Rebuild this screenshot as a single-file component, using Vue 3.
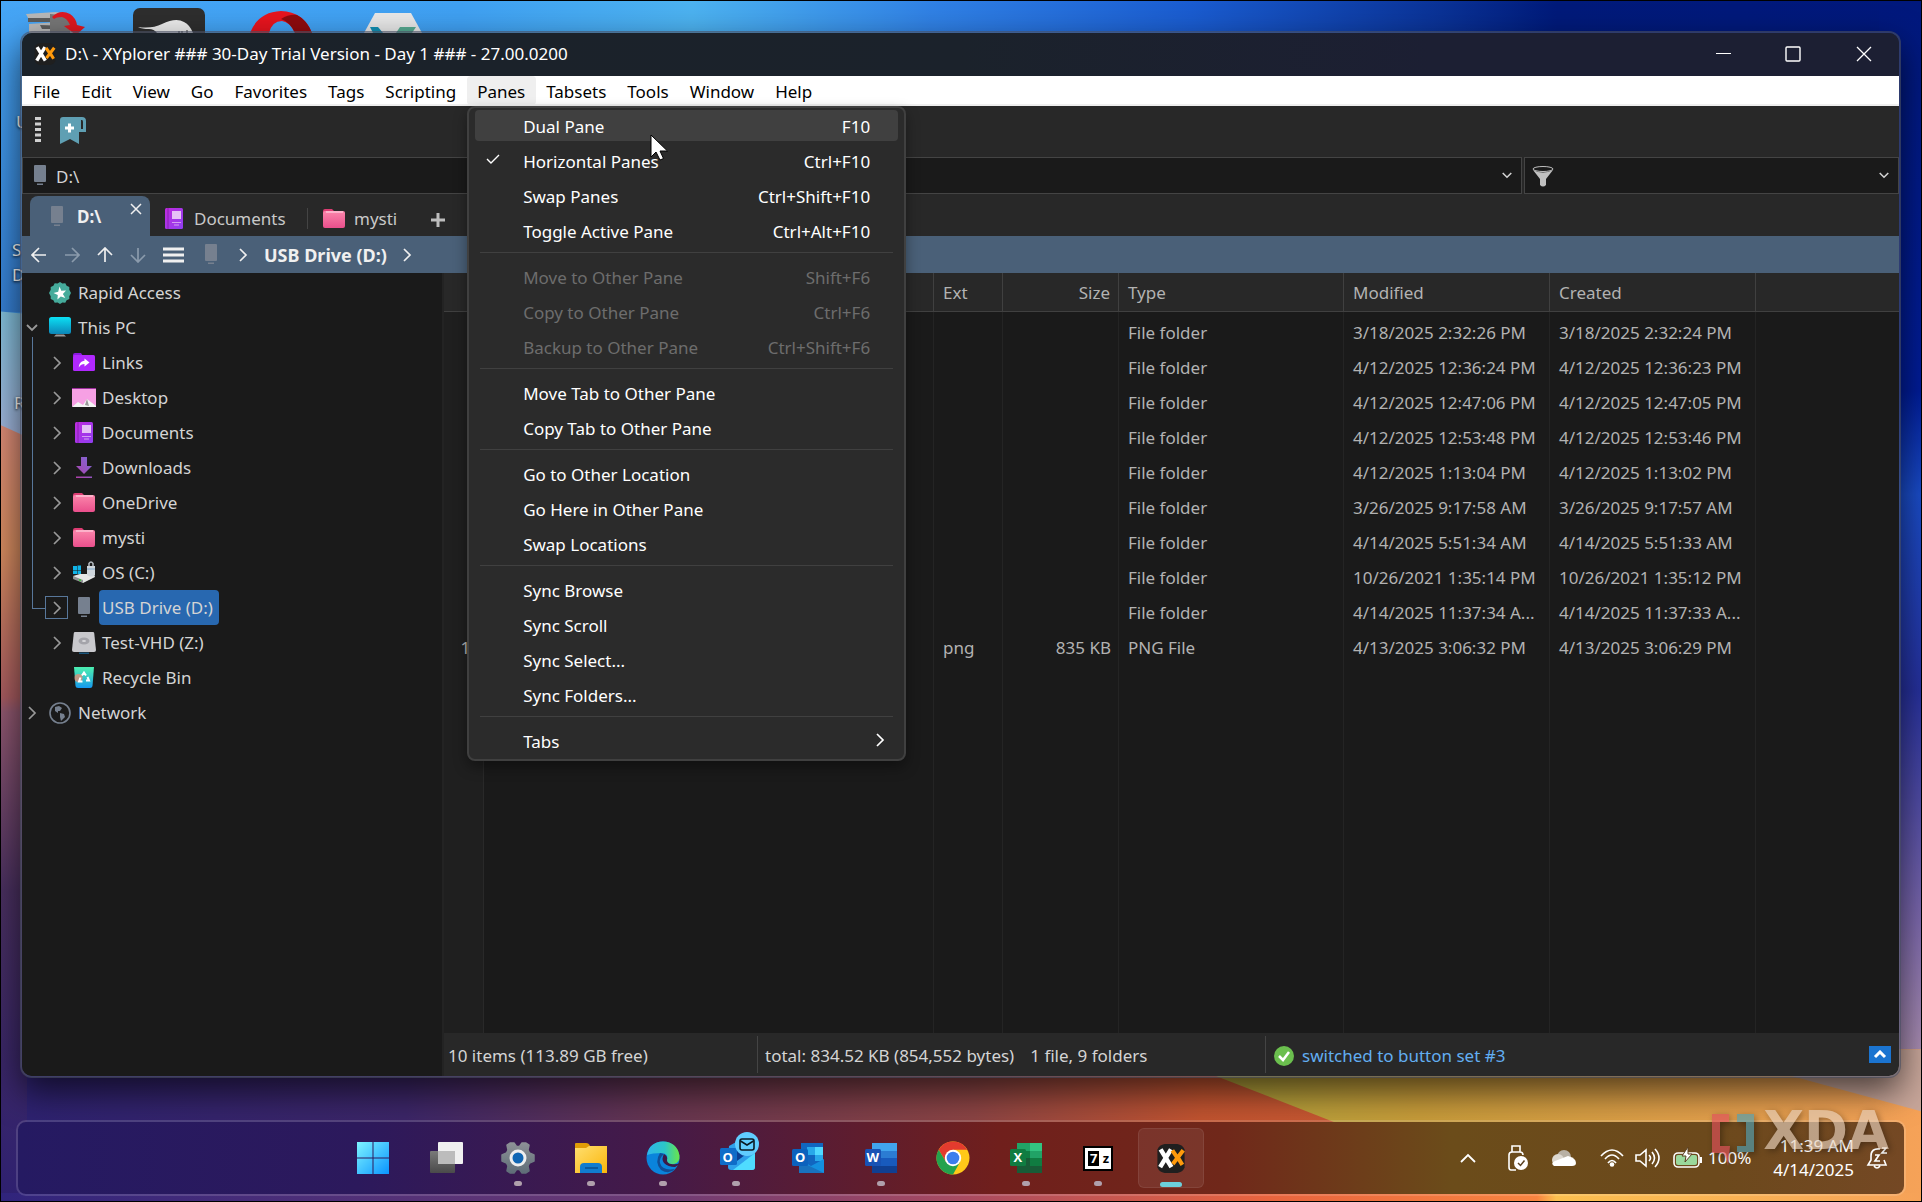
<script setup>
const menus = ['File', 'Edit', 'View', 'Go', 'Favorites', 'Tags', 'Scripting', 'Panes', 'Tabsets', 'Tools', 'Window', 'Help']

const paneMenu = [
  [
    { label: 'Dual Pane', keys: 'F10', hover: true },
    { label: 'Horizontal Panes', keys: 'Ctrl+F10', checked: true },
    { label: 'Swap Panes', keys: 'Ctrl+Shift+F10' },
    { label: 'Toggle Active Pane', keys: 'Ctrl+Alt+F10' },
  ],
  [
    { label: 'Move to Other Pane', keys: 'Shift+F6', off: true },
    { label: 'Copy to Other Pane', keys: 'Ctrl+F6', off: true },
    { label: 'Backup to Other Pane', keys: 'Ctrl+Shift+F6', off: true },
  ],
  [{ label: 'Move Tab to Other Pane' }, { label: 'Copy Tab to Other Pane' }],
  [{ label: 'Go to Other Location' }, { label: 'Go Here in Other Pane' }, { label: 'Swap Locations' }],
  [{ label: 'Sync Browse' }, { label: 'Sync Scroll' }, { label: 'Sync Select...' }, { label: 'Sync Folders...' }],
  [{ label: 'Tabs', sub: true }],
]

const tree = [
  { label: 'Rapid Access', icon: 'rapid', level: 0 },
  { label: 'This PC', icon: 'pc', level: 0, open: true },
  { label: 'Links', icon: 'links', level: 1, more: true },
  { label: 'Desktop', icon: 'desktop', level: 1, more: true },
  { label: 'Documents', icon: 'docs', level: 1, more: true },
  { label: 'Downloads', icon: 'down', level: 1, more: true },
  { label: 'OneDrive', icon: 'folder', level: 1, more: true },
  { label: 'mysti', icon: 'folder', level: 1, more: true },
  { label: 'OS (C:)', icon: 'osdrive', level: 1, more: true },
  { label: 'USB Drive (D:)', icon: 'usb', level: 1, more: true, current: true },
  { label: 'Test-VHD (Z:)', icon: 'vhd', level: 1, more: true },
  { label: 'Recycle Bin', icon: 'bin', level: 1 },
  { label: 'Network', icon: 'net', level: 0, more: true },
]

const folder = (modified, created) => ({ n: '', ext: '', size: '', type: 'File folder', modified, created })
const files = [
  folder('3/18/2025 2:32:26 PM', '3/18/2025 2:32:24 PM'),
  folder('4/12/2025 12:36:24 PM', '4/12/2025 12:36:23 PM'),
  folder('4/12/2025 12:47:06 PM', '4/12/2025 12:47:05 PM'),
  folder('4/12/2025 12:53:48 PM', '4/12/2025 12:53:46 PM'),
  folder('4/12/2025 1:13:04 PM', '4/12/2025 1:13:02 PM'),
  folder('3/26/2025 9:17:58 AM', '3/26/2025 9:17:57 AM'),
  folder('4/14/2025 5:51:34 AM', '4/14/2025 5:51:33 AM'),
  folder('10/26/2021 1:35:14 PM', '10/26/2021 1:35:12 PM'),
  folder('4/14/2025 11:37:34 A...', '4/14/2025 11:37:33 A...'),
  { n: '10', ext: 'png', size: '835 KB', type: 'PNG File', modified: '4/13/2025 3:06:32 PM', created: '4/13/2025 3:06:29 PM' },
]

const apps = [
  { id: 'start', name: 'Start' },
  { id: 'taskview', name: 'Task View' },
  { id: 'settings', name: 'Settings', run: true },
  { id: 'explorer', name: 'File Explorer', run: true },
  { id: 'edge', name: 'Edge', run: true },
  { id: 'newoutlook', name: 'Outlook (new)', run: true, glyph: 'O' },
  { id: 'outlook', name: 'Outlook', glyph: 'O' },
  { id: 'word', name: 'Word', run: true, glyph: 'W' },
  { id: 'chrome', name: 'Chrome' },
  { id: 'excel', name: 'Excel', run: true, glyph: 'X' },
  { id: 'sevenzip', name: '7-Zip', run: true, glyph: '7', second: 'z' },
  { id: 'xy', name: 'XYplorer', active: true },
]
</script>

<template>
  <div class="desktop">
    <svg class="defs" width="0" height="0" aria-hidden="true">
      <defs>
        <linearGradient id="gPink" x1="0" y1="0" x2="0" y2="1"><stop offset="0" stop-color="#fb86ab" /><stop offset="1" stop-color="#ea4f8c" /></linearGradient>
        <linearGradient id="gDoc" x1="0" y1="0" x2="1" y2="1"><stop offset="0" stop-color="#c02be0" /><stop offset="1" stop-color="#8f3ff0" /></linearGradient>
        <linearGradient id="gPc" x1="0" y1="0" x2="0" y2="1"><stop offset="0" stop-color="#0be0f4" /><stop offset="1" stop-color="#0c86b8" /></linearGradient>
        <linearGradient id="gDown" x1="0" y1="1" x2="1" y2="0"><stop offset="0" stop-color="#b03fa8" /><stop offset="1" stop-color="#7c6ad8" /></linearGradient>
        <linearGradient id="gBin" x1="0" y1="0" x2="0" y2="1"><stop offset="0" stop-color="#4cf0b0" /><stop offset=".5" stop-color="#36c8c8" /><stop offset="1" stop-color="#1498f0" /></linearGradient>
        <linearGradient id="gWin" x1="0" y1="0" x2="1" y2="1"><stop offset="0" stop-color="#7ef4ff" /><stop offset="1" stop-color="#0a94ff" /></linearGradient>
        <linearGradient id="gFold" x1="0" y1="0" x2="1" y2="1"><stop offset="0" stop-color="#ffdf70" /><stop offset="1" stop-color="#fbb60a" /></linearGradient>
        <linearGradient id="gEdge" x1="0" y1="0" x2="1" y2="0"><stop offset="0" stop-color="#2fb6ea" /><stop offset=".55" stop-color="#2cc6c8" /><stop offset="1" stop-color="#6ae548" /></linearGradient>
        <linearGradient id="gGear" x1="0" y1="0" x2="0" y2="1"><stop offset="0" stop-color="#8d9196" /><stop offset="1" stop-color="#5f6d78" /></linearGradient>
        <linearGradient id="gDark" x1="0" y1="0" x2="0" y2="1"><stop offset="0" stop-color="#7a7a7a" /><stop offset="1" stop-color="#4a4a4a" /></linearGradient>
      </defs>

      <symbol id="i-rapid" viewBox="0 0 24 24">
        <path fill="#45ab9b" d="M12 1l2.400 1.600 2.900-.4 1.300 2.600 2.700 1.100v2.900L23 12l-1.700 3.200v2.900l-2.700 1.100-1.300 2.600-2.900-.4L12 23l-2.400-1.600-2.900.4-1.300-2.600-2.700-1.100v-2.900L1 12l1.700-3.200V5.900l2.700-1.100 1.300-2.600 2.900.4z" />
        <path fill="#fff" d="M11.500 5.500l1.800 4.300 4.700-.4-3.100 3.500 2.400 4.100-4.500-1.600-3.400 3.200.4-4.700-4.300-2 4.700-1.200z" />
      </symbol>
      <symbol id="i-pc" viewBox="0 0 24 24">
        <rect x="1" y="1" width="22" height="17" rx="2.500" fill="url(#gPc)" /><path fill="#9a9a9a" d="M8 18.500h8l2 2H6z" />
      </symbol>
      <symbol id="i-links" viewBox="0 0 24 24">
        <path fill="#8a18e0" d="M1 5V4q0-2 2-2h6l2 3z" /><rect x="1" y="4" width="22" height="16" rx="1.500" fill="#b128ff" />
        <path fill="#fff" d="M12.500 7.500l5 4-5 4v-2.400c-2.500 0-4 .9-5.700 3.400.2-3.800 2-6.300 5.700-6.800z" />
      </symbol>
      <symbol id="i-desktop" viewBox="0 0 24 24">
        <rect y="2" width="24" height="19" rx="1" fill="#f6a0e4" /><path fill="#9c2f9c" d="M0 2h24v1H0z" />
        <path fill="#f4f4f4" d="M0 21l6-5 5 3 4-6 9 7v1z" /><path fill="#9a9a9a" d="M15 13l2 7-4-1z" />
      </symbol>
      <symbol id="i-docs" viewBox="0 0 24 24">
        <rect x="3" y="1" width="18" height="21" rx="1.500" fill="url(#gDoc)" /><path fill="#8a1fb0" d="M5.500 1h1v21h-1z" />
        <rect x="10" y="4" width="9" height="8" fill="#e6c2f6" /><path fill="#d59cf2" d="M10 15h9v1h-9zM12 17.500h5v1h-5z" />
      </symbol>
      <symbol id="i-down" viewBox="0 0 24 24"><path fill="url(#gDown)" d="M9 1h6v9h5l-8 8-8-8h5zM4 20.500h16V22H4z" /></symbol>
      <symbol id="i-folder" viewBox="0 0 24 24">
        <path fill="#dc3c72" d="M1 8V4q0-2 2-2h7l3 3h8q2 0 2 2z" /><rect x="1" y="4" width="22" height="17" rx="2" fill="url(#gPink)" />
        <path fill="#ffe0ea" d="M4 4.500h17v1H4z" />
      </symbol>
      <symbol id="i-osdrive" viewBox="0 0 24 24">
        <path fill="#10b4e8" d="M1 5h4v4H1zM5.500 4.500H9V9H5.500zM1 9.500h4V13H1zM5.500 9.500H9V13H5.500z" />
        <path fill="#e4e6e6" d="M1 15l7-2 14 0 1 3-12 6z" /><path fill="#8e9292" d="M1 15l10 4v3L1 18z" /><circle cx="8" cy="19" r="1" fill="#2bd02b" />
        <path fill="none" stroke="#b6bcc2" stroke-width="1.500" d="M17 6V2.500q2-3 4 0V6" /><path fill="#cfd6dc" d="M15 5h8v9q-4 3-8 0z" /><path stroke="#7da6c8" d="M15 8h8" />
      </symbol>
      <symbol id="i-usb" viewBox="0 0 24 24"><rect x="6" y="1" width="12" height="17" rx="1" fill="#76808f" /><path fill="#76808f" d="M9 19.500h6V21H9z" /></symbol>
      <symbol id="i-vhd" viewBox="0 0 24 24">
        <path fill="#c9c9cd" d="M3 1h18q1 0 1.200 1L24 19q0 2-2 2H2q-2 0-2-2L1.800 2Q2 1 3 1z" /><ellipse cx="12" cy="10" rx="5.500" ry="3.500" fill="#a4a4aa" /><ellipse cx="12" cy="10" rx="2" ry="1" fill="#d8d8dc" />
        <path fill="#1b567c" d="M7 21.500h10V23H7z" />
      </symbol>
      <symbol id="i-bin" viewBox="0 0 24 24">
        <path fill="url(#gBin)" d="M2 1h20l-1.500 19q-.2 2-2.500 2H6q-2.300 0-2.500-2z" /><circle cx="6.500" cy="12" r="4" fill="#ee8a70" opacity=".75" />
        <path fill="none" stroke="#fff" stroke-width="2" d="M10 9.500l2-3 2 3M15.500 11l1.500 3.500h-3M10.500 15.500H7l1.500-4" />
      </symbol>
      <symbol id="i-net" viewBox="0 0 24 24">
        <circle cx="12" cy="12" r="10" fill="none" stroke="#76808f" stroke-width="1.600" />
        <path fill="#76808f" d="M7 6l4-1 3 2-2 3-2 0 0 2-3-2zM12 12l4 1 1 3-4 4-1-4z" />
      </symbol>
      <symbol id="i-xy" viewBox="0 0 32 32">
        <path fill="#1f1f1f" d="M9 0h14q6 1 8 6v20q-2 5-8 6H9q-6-1-8-6V6Q3 1 9 0z" />
        <path stroke="#fff" stroke-width="5" fill="none" d="M4.500 6l12 19.500M16 6L4 25.500" />
        <path stroke="#ff9a0c" stroke-width="4.500" fill="none" d="M17.500 7l5 7.500M29.500 7L18 22M23 14l5.500 9" />
      </symbol>
      <symbol id="i-start" viewBox="0 0 34 34"><path fill="url(#gWin)" d="M1 1h15.500v15.500H1zM17.500 1H33v15.500H17.500zM1 17.500h15.500V33H1zM17.500 17.500H33V33H17.500z" /></symbol>
      <symbol id="i-taskview" viewBox="0 0 34 34"><rect x="1" y="10" width="25" height="22" rx="1" fill="url(#gDark)" /><rect x="9" y="1" width="25" height="22" rx="1" fill="#f0f0f0" /><path fill="#bcbcbc" d="M9 10h17v13H9z" /></symbol>
      <symbol id="i-settings" viewBox="0 0 34 34">
        <path fill="url(#gGear)" stroke="url(#gGear)" stroke-width="1.500" stroke-linejoin="round" d="M9 2h4l2.500 3.500h3L21 2h4l3 2-1 5 1.500 3 4.500 2v6l-4.500 2-1.500 3 1 5-3 2h-4l-2.500-3.500h-3L13 32H9l-3-2 1-5-1.500-3L1 20v-6l4.500-2L7 9 6 4z" />
        <circle cx="17" cy="17" r="7" fill="#1066b4" stroke="#eee" stroke-width="3" />
      </symbol>
      <symbol id="i-explorer" viewBox="0 0 34 34">
        <path fill="#e09c06" d="M1 8V3q0-1 1-1h10q3 0 4 3l-2 3z" /><path fill="url(#gFold)" d="M1 7h11l3-2h18v27H1z" />
        <path fill="#117cd0" d="M6 32v-6q0-4 4-4h14q4 0 4 4v6z" /><path stroke="#0a4f90" stroke-width="1.500" d="M11 27h13" />
      </symbol>
      <symbol id="i-edge" viewBox="0 0 34 34">
        <circle cx="17" cy="17" r="16.500" fill="#0a84dc" /><path fill="url(#gEdge)" d="M1 14Q3 1 17 .5q14 .5 16.500 14 .5 7-5.500 8.500-9 1-7-4 2-6-5-7-10 0-15 2z" />
        <path fill="#114e96" d="M14 12q-6 9 1 17 8 5 14-1-13 2-15-6-1-5 4-9z" /><path fill="#3c1a46" d="M18 13q-3 5 0 9 4 4 11 4l5-3v-1q-4 2-9 1-4-1-4-4 1-4-3-6z" />
      </symbol>
      <symbol id="i-newoutlook" viewBox="0 0 40 40">
        <path fill="#2ea0ea" d="M10 14L28 4l8 14v17q0 3-3 3H12q-3 0-3-3z" /><path fill="#0b3f92" d="M18 17h16L18 29z" /><path fill="#4fdcff" d="M36 21v14q0 3-3 3H14z" />
        <rect x="1" y="16" width="17" height="17" rx="1.500" fill="#0f6cc8" />
        <circle cx="28" cy="12" r="12" fill="#60cdff" /><rect x="21" y="7" width="14" height="11" rx="2" fill="none" stroke="#0a1a24" stroke-width="1.600" /><path d="M21.500 9l6.500 4 6.500-4" fill="none" stroke="#0a1a24" stroke-width="1.500" />
      </symbol>
      <symbol id="i-outlook" viewBox="0 0 34 34">
        <rect x="10" y="2" width="22" height="28" fill="#1166c0" /><path fill="#50d9ff" d="M24 6h8v8h-8z" /><path fill="#28a8ea" d="M16 6h8v8h-8zM24 14h8v6h-8z" /><path fill="#1490df" d="M8 32V18l12 7 13-7v14z" /><path fill="#1a5fa8" d="M8 20l25 12H8z" opacity=".6" />
        <rect x="1" y="8" width="16" height="17" rx="1.500" fill="#0b62bd" />
      </symbol>
      <symbol id="i-word" viewBox="0 0 34 34">
        <path fill="#41a5ee" d="M8 2h25v8H8z" /><path fill="#2b7cd3" d="M8 10h25v7H8z" /><path fill="#185abd" d="M8 17h25v8H8z" /><path fill="#103f91" d="M8 25h25v7H8z" />
        <rect x="1" y="8" width="16" height="17" rx="1.500" fill="#1852b4" />
      </symbol>
      <symbol id="i-excel" viewBox="0 0 34 34">
        <path fill="#21a366" d="M8 2h13v8H8z" /><path fill="#33c481" d="M21 2h12v8H21z" /><path fill="#107c41" d="M8 10h13v7H8zM21 17h12v8H21z" /><path fill="#21a366" d="M21 10h12v7H21z" /><path fill="#185c37" d="M8 17h13v8h12v7H8z" />
        <rect x="1" y="8" width="16" height="17" rx="1.500" fill="#107c41" />
      </symbol>
      <symbol id="i-chrome" viewBox="0 0 34 34">
        <circle cx="17" cy="17" r="16.500" fill="#ffc919" /><path fill="#e33b2e" d="M2.700 8.700A16.500 16.500 0 0 1 31.300 8.700H17L10 21z" /><path fill="#23a24d" d="M2.700 8.700A16.500 16.500 0 0 0 17 33.500L24 21H10z" />
        <circle cx="17" cy="17" r="8.200" fill="#fff" /><circle cx="17" cy="17" r="6.300" fill="#3b7ded" />
      </symbol>
      <symbol id="i-sevenzip" viewBox="0 0 34 34">
        <rect x="2" y="5" width="30" height="25" fill="#000" /><rect x="4" y="7" width="26" height="21" fill="#fff" /><path d="M7 10h11v15H7z" fill="#000" />
      </symbol>
      <symbol id="i-right" viewBox="0 0 12 16"><path fill="none" stroke="currentColor" stroke-width="1.700" d="M3 2l6 6-6 6" /></symbol>
      <symbol id="i-chev" viewBox="0 0 14 10"><path fill="none" stroke="currentColor" stroke-width="1.800" d="M2 2l5 5 5-5" /></symbol>
    </svg>

    <svg class="wall" viewBox="0 0 1922 1202" preserveAspectRatio="none" aria-hidden="true">
      <defs>
        <linearGradient id="wTop"><stop offset="0" stop-color="#46a6f6" /><stop offset=".24" stop-color="#3fa0f2" /><stop offset=".36" stop-color="#4cb2f0" /><stop offset=".49" stop-color="#2f7fe4" /><stop offset=".62" stop-color="#1a5cd0" /><stop offset=".75" stop-color="#0a3296" /><stop offset=".81" stop-color="#001a7a" /><stop offset="1" stop-color="#00187c" /></linearGradient>
        <linearGradient id="wL1" x1="0" y1="0" x2="0" y2="1"><stop offset="0" stop-color="#46a6f6" /><stop offset="1" stop-color="#3680d4" /></linearGradient>
        <linearGradient id="wL2" x1="0" y1="0" x2="0" y2="1"><stop offset="0" stop-color="#82c0dc" /><stop offset="1" stop-color="#a9b2dc" /></linearGradient>
        <linearGradient id="wL3" x1="0" y1="0" x2="0" y2="1"><stop offset="0" stop-color="#dc8c78" /><stop offset=".16" stop-color="#d68c60" /><stop offset=".35" stop-color="#a85c60" /><stop offset=".37" stop-color="#905870" /><stop offset=".6" stop-color="#4a3060" /><stop offset="1" stop-color="#2e2070" /></linearGradient>
        <linearGradient id="wR" x1="0" y1="0" x2="0" y2="1"><stop offset="0" stop-color="#00187c" /><stop offset=".34" stop-color="#001c98" /><stop offset=".43" stop-color="#1a4cc8" /><stop offset=".6" stop-color="#26309c" /><stop offset=".8" stop-color="#7c68ac" /><stop offset="1" stop-color="#caa8b4" /></linearGradient>
        <linearGradient id="wBot"><stop offset="0" stop-color="#2e2270" /><stop offset=".2" stop-color="#3c2668" /><stop offset=".34" stop-color="#683650" /><stop offset=".5" stop-color="#8c4444" /><stop offset=".62" stop-color="#c25430" /><stop offset="1" stop-color="#e0663a" /></linearGradient>
        <linearGradient id="wGold"><stop offset="0" stop-color="#a8a43a" /><stop offset=".35" stop-color="#c89c3a" /><stop offset="1" stop-color="#f6a258" /></linearGradient>
        <linearGradient id="wEdge"><stop offset="0" stop-color="#30247c" /><stop offset=".34" stop-color="#6c3a74" /><stop offset=".5" stop-color="#a84a60" /><stop offset=".66" stop-color="#e8643e" /><stop offset=".8" stop-color="#f88440" /><stop offset=".81" stop-color="#fcc050" /><stop offset="1" stop-color="#f6a258" /></linearGradient>
      </defs>
      <rect width="1922" height="600" fill="url(#wTop)" />
      <rect width="60" height="312" fill="url(#wL1)" />
      <path fill="url(#wL2)" d="M0 311l60 6v150H0z" />
      <path fill="url(#wL3)" d="M0 425l60 27v750H0z" />
      <rect x="1880" width="42" height="1150" fill="url(#wR)" />
      <rect x="26" y="1050" width="1896" height="152" fill="url(#wBot)" />
      <path fill="url(#wGold)" d="M1150 1050L1222 1079 1480 1180 1922 1202V1050z" />
      <path fill="#c8a69a" d="M1700 1050L1797 1078 1922 1112V1050z" />
      <rect y="1194" width="1922" height="8" fill="url(#wEdge)" />
    </svg>

    <svg class="shortcuts" width="480" height="33" viewBox="0 0 480 33" aria-hidden="true">
      <path fill="#b8b8b8" d="M26 14l30-2 14 3v3H28zM29 24l30-2 14 2v9H29z" /><path fill="#5c5c5c" d="M28 18h34v4H28zM40 25l28 1v3H42z" /><path fill="#777" d="M50 14l20 2v17H50z" />
      <path fill="#e01820" d="M52 17q8-8 18-3 6 4 7 11l8 2-9 8-12-9 6-1q-3-7-8-8-6 0-8 2z" />
      <rect x="133" y="8" width="72" height="40" rx="7" fill="#2e2e2e" /><path fill="#ececec" d="M138 27q14 2 24-3 14-7 22-2 6 3 9 11h-36q-3-4-8-4-7 0-11-2z" /><path stroke="#333" d="M179 31v2M182 31v2M187 30v3" />
      <path fill="#e8141e" d="M250 33Q258 12 281 11q23 1 31 22h-17q-5-11-13-12-10 0-13 12z" /><path fill="#8f0a0e" d="M281 19q8-5 16-4 10 5 15 18h-17q-5-11-14-14z" />
      <path fill="#e8e8e8" d="M375 13h36l11 20h-58z" /><path fill="#1190b4" d="M370 27h8l5 6h-10z" /><path fill="#57ab92" d="M400 27h16l-4 6h-16z" />
    </svg>
    <span class="label u">U</span><span class="label s">S</span><span class="label d">D</span><span class="label r">R</span>

    <main class="window">
      <header class="titlebar">
        <svg class="logo"><use href="#i-xy" /></svg>
        <h1>D:\ - XYplorer ### 30-Day Trial Version - Day 1 ### - 27.00.0200</h1>
        <button aria-label="Minimize"><svg width="16" height="16"><path d="M0 7.500h15" stroke="#fff" /></svg></button>
        <button aria-label="Maximize"><svg width="16" height="16"><rect x="1" y="1" width="14" height="14" rx="1" fill="none" stroke="#fff" stroke-width="1.400" /></svg></button>
        <button aria-label="Close"><svg width="16" height="16"><path d="M1 1l14 14M15 1L1 15" stroke="#fff" stroke-width="1.300" /></svg></button>
      </header>

      <nav class="menubar">
        <div v-for="m in menus" :key="m" class="slot">
          <button :class="{ open: m === 'Panes' }">{{ m }}</button>
          <div v-if="m === 'Panes'" class="popup" role="menu">
            <div v-for="(group, g) in paneMenu" :key="g" class="group">
              <button v-for="item in group" :key="item.label" role="menuitem" :class="{ hover: item.hover }" :disabled="item.off">
                <svg v-if="item.checked" class="tick" width="16" height="12"><path d="M2 6l4 4 8-8" fill="none" stroke="#fff" stroke-width="1.400" /></svg>
                <span>{{ item.label }}</span>
                <span v-if="item.keys" class="keys">{{ item.keys }}</span>
                <svg v-if="item.sub" class="sub"><use href="#i-right" /></svg>
              </button>
            </div>
          </div>
        </div>
      </nav>

      <div class="toolbar">
        <svg width="6" height="26"><path d="M3 0v26" stroke="#d0d0d0" stroke-width="6" stroke-dasharray="3 2.500" /></svg>
        <button aria-label="Bookmark">
          <svg width="28" height="28"><path fill="#5f9fb3" d="M1 4q0-3 3-3h19q4 0 4 4v11h-7v12l-9-5-10 5z" /><path fill="#282828" d="M22 4h1q1 0 1 2v7h-2z" /><path stroke="#fff" stroke-width="3" d="M10.500 7.500v9M6 12h9" /></svg>
        </button>
      </div>

      <div class="address">
        <label class="field">
          <svg class="ico"><use href="#i-usb" /></svg>
          <input aria-label="Address" value="D:\" />
          <svg class="drop"><use href="#i-chev" /></svg>
        </label>
        <label class="field filter">
          <svg width="22" height="22"><path fill="#c0c0c0" d="M1 5q10 5 20 0l-7 9v6q-3 3-6 0v-6z" /><ellipse cx="11" cy="4" rx="10" ry="2.500" fill="#1a1a1a" stroke="#c0c0c0" /></svg>
          <input aria-label="Filter" />
          <svg class="drop"><use href="#i-chev" /></svg>
        </label>
      </div>

      <div class="tabs">
        <div class="tab current">
          <svg class="ico"><use href="#i-usb" /></svg><b>D:\</b>
          <button aria-label="Close tab"><svg width="12" height="12"><path d="M1 1l10 10M11 1L1 11" stroke="#f0f0f0" stroke-width="1.500" /></svg></button>
        </div>
        <div class="tab docs"><svg class="ico"><use href="#i-docs" /></svg>Documents</div>
        <div class="tab user"><svg class="ico"><use href="#i-folder" /></svg>mysti</div>
        <button aria-label="New tab" class="plus"><svg width="14" height="14"><path d="M7 0v14M0 7h14" stroke="#bdbdbd" stroke-width="3" /></svg></button>
      </div>

      <div class="crumbs">
        <button aria-label="Back"><svg width="16" height="16"><path d="M15 8H1M8 1L1 8l7 7" /></svg></button>
        <button aria-label="Forward" class="dim"><svg width="16" height="16"><path d="M1 8h14M8 1l7 7-7 7" /></svg></button>
        <button aria-label="Up"><svg width="16" height="16"><path d="M8 15V1M1 8l7-7 7 7" /></svg></button>
        <button aria-label="Down" class="dim"><svg width="16" height="16"><path d="M8 1v14M1 8l7 7 7-7" /></svg></button>
        <button aria-label="Menu" class="burger"><svg width="21" height="16"><path d="M0 2h21M0 8h21M0 14h21" /></svg></button>
        <svg class="ico"><use href="#i-usb" /></svg>
        <svg class="sep"><use href="#i-right" /></svg>
        <b>USB Drive (D:)</b>
        <svg class="sep"><use href="#i-right" /></svg>
      </div>

      <div class="body">
        <ul class="tree">
          <li v-for="node in tree" :key="node.label" :class="['l' + node.level, { current: node.current }]">
            <span class="twist" :class="{ box: node.current }">
              <svg v-if="node.more" class="closed"><use href="#i-right" /></svg>
              <svg v-if="node.open" class="opened"><use href="#i-chev" /></svg>
            </span>
            <svg class="ico"><use :href="'#i-' + node.icon" /></svg>
            <span class="name">{{ node.label }}</span>
          </li>
        </ul>

        <section class="right">
          <div class="files">
            <table>
              <colgroup><col class="c-n" /><col class="c-name" /><col class="c-ext" /><col class="c-size" /><col class="c-type" /><col class="c-date" /><col class="c-date" /><col /></colgroup>
              <thead><tr><th></th><th></th><th>Ext</th><th class="num">Size</th><th>Type</th><th>Modified</th><th>Created</th><th></th></tr></thead>
              <tbody>
                <tr v-for="(f, i) in files" :key="i">
                  <td class="idx">{{ f.n }}</td><td></td><td>{{ f.ext }}</td><td class="num">{{ f.size }}</td><td>{{ f.type }}</td><td>{{ f.modified }}</td><td>{{ f.created }}</td><td></td>
                </tr>
              </tbody>
            </table>
          </div>
          <footer class="status">
            <span class="free">10 items (113.89 GB free)</span>
            <span class="total"><span>total: 834.52 KB (854,552 bytes)</span><span>1 file, 9 folders</span></span>
            <span class="msg">
              <svg width="20" height="20"><circle cx="10" cy="10" r="10" fill="#6bbf4e" /><path d="M5 10l4 4 6-8" fill="none" stroke="#fff" stroke-width="2.500" /></svg>
              switched to button set #3
            </span>
            <button aria-label="Show panel"><svg width="14" height="9"><path d="M2 7l5-5 5 5" fill="none" stroke="#fff" stroke-width="3" /></svg></button>
          </footer>
        </section>
      </div>
    </main>

    <footer class="taskbar">
      <nav class="apps">
        <button v-for="a in apps" :key="a.id" :aria-label="a.name" :class="[a.id, { run: a.run, active: a.active }]">
          <svg><use :href="'#i-' + a.id" /></svg>
          <span v-if="a.glyph" class="glyph">{{ a.glyph }}</span>
          <span v-if="a.second" class="glyph second">{{ a.second }}</span>
        </button>
      </nav>
      <div class="tray">
        <svg class="t-up" width="18" height="12"><path d="M2 10l7-7 7 7" fill="none" stroke="#fff" stroke-width="1.800" /></svg>
        <svg class="t-usb" width="22" height="26"><path d="M5 7V1h8v6M9 25H4q-2 0-2-3V10q0-3 3-3h8q3 0 3 3" fill="none" stroke="#fff" stroke-width="1.600" /><circle cx="14" cy="18" r="7" fill="#fff" /><path d="M11 18l2.500 2.500 4-5" fill="none" stroke="#5a4020" stroke-width="1.500" /></svg>
        <svg class="t-cloud" width="26" height="18"><circle cx="13" cy="8" r="7" fill="#b8b0a4" /><circle cx="7" cy="11" r="6" fill="#ddd8d0" /><path d="M3 17q-4-3 1-5l13-5q8 2 8 7 0 3-4 3z" fill="#fff" /></svg>
        <svg class="t-wifi" width="24" height="20"><g fill="none" stroke="#fff" stroke-width="1.700"><path d="M1 8q11-12 22 0M5 11q7-8 14 0M8 15q4-5 8 0" /></g><circle cx="12" cy="16.500" r="2.300" fill="#fff" /></svg>
        <svg class="t-vol" width="26" height="22"><g fill="none" stroke="#fff" stroke-width="1.600"><path d="M1 8h4l6-5v16l-6-5H1zM14 8q3 3 0 6M17 5q5 6 0 12M20 2q8 9 0 18" /></g></svg>
        <svg class="t-bat" width="30" height="22"><rect x="1" y="6" width="25" height="14" rx="4" fill="none" stroke="#fff" stroke-width="1.600" /><rect x="3" y="8" width="21" height="10" rx="2" fill="#9ad89c" /><path d="M28 10v6" stroke="#fff" stroke-width="2" /><path d="M15 0l-6 9h4l-1 6 7-8h-4z" fill="#fff" stroke="#5a4020" /></svg>
        <span>100%</span>
        <span class="clock"><span>11:39 AM</span><span>4/14/2025</span></span>
        <svg class="t-bell" width="24" height="24"><path d="M14 3Q5 2 5 10v4l-3 5h18l-2-5M8 20q3 4 6 0" fill="none" stroke="#fff" stroke-width="1.600" /><path d="M9 9h4l-4 6h5M16 2h4l-4 5h5" fill="none" stroke="#fff" stroke-width="1.700" /></svg>
      </div>
    </footer>

    <div class="mark">
      <svg width="42" height="52"><path fill="#e0505c" d="M0 0h17v8H8v24h10l-2 20q-1-8-5-13H0z" /><path fill="#4fa0b4" d="M25 0h17v38H25v-6h9V8h-9z" /></svg>
      <span>XDA</span>
    </div>

    <svg class="cursor" width="20" height="28" viewBox="0 0 20 28" aria-hidden="true"><path fill="#fff" stroke="#000" d="M1 1v22l5-5 4 8 3.500-1.500L10 17h7.500z" /></svg>
  </div>
</template>

<style>
body { background: #000; }
</style>

<style scoped>
* { box-sizing: border-box; }
.desktop { position: relative; isolation: isolate; display: flex; flex-direction: column; min-height: 100vh; padding: 30px 20px 5px 19px; border: 1px solid #000; overflow: hidden; font: 17px/24px "Noto Sans", "Open Sans", sans-serif; color: #d4d4d4; }
button { font: inherit; color: inherit; background: none; border: 0; padding: 0; display: flex; align-items: center; justify-content: center; }
svg { flex: none; display: block; }
.defs { position: absolute; }
.wall { position: absolute; inset: 0; width: 100%; height: 100%; z-index: -2; }
.shortcuts { position: absolute; top: -1px; left: -1px; z-index: -1; }
.label { position: absolute; z-index: -1; color: #fff; text-shadow: 0 1px 3px #000; }
.u { left: 15px; top: 109px; }
.s { left: 11px; top: 237px; }
.d { left: 11px; top: 262px; }
.r { left: 13px; top: 390px; }
.ico { width: 24px; height: 24px; }

.window { flex: 1; display: flex; flex-direction: column; border: 2px solid #4a4f63a0; border-radius: 12px; background: #282828; background-clip: padding-box; box-shadow: 0 14px 34px #000000a0; }
.titlebar { display: flex; align-items: center; height: 43px; padding: 0 0 2px 12px; border-radius: 10px 10px 0 0; background: linear-gradient(90deg, #1b2229, #1b222b 50%, #1c1f33 75%); color: #fff; }
.titlebar h1 { flex: 1; margin: 0; font: inherit; }
.titlebar button { width: 71px; height: 41px; }
.titlebar button:nth-of-type(1) { width: 67px; }
.logo { width: 22px; height: 22px; margin-right: 9px; }

.menubar { display: flex; height: 30px; padding-left: 1px; background: #fff; border-bottom: 2px solid #efefef; color: #000; }
.slot { position: relative; }
.menubar .slot > button { height: 29px; padding: 2px 11px 0 10px; border-radius: 4px; }
.menubar .slot > button.open { background: #efefef; }
.popup { position: absolute; z-index: 5; top: 30px; left: 0; width: 439px; padding: 2px 6px 0; border: 2px solid #404040; border-radius: 8px; background: #2b2b2b; box-shadow: 0 6px 14px #00000060; color: #fff; }
.group { display: flow-root; }
.group + .group { border-top: 1px solid #404040; margin: 2px 5px 0; padding-top: 8px; }
.group + .group button { width: calc(100% + 10px); margin-left: -5px; }
.group button { position: relative; width: 100%; height: 31px; margin-bottom: 4px; padding: 2px 28px 0 48px; border-radius: 4px; justify-content: space-between; }
.group:last-child button { margin-bottom: 3px; }
.group button.hover { background: #404040; }
.group button:disabled { color: #6d6d6d; }
.tick { position: absolute; left: 10px; top: 8px; }
.sub { position: absolute; right: 12px; top: 7px; width: 12px; height: 16px; }

.toolbar { display: flex; align-items: center; gap: 18px; height: 51px; padding: 0 13px 4px; }
.address { display: flex; gap: 2px; height: 37px; }
.field { display: flex; align-items: center; flex: 1; padding: 0 8px 0 5px; border: 1px solid #444; background: #1a1a1a; }
.filter { flex: 0 0 20%; padding-left: 7px; }
.field input { flex: 1; min-width: 0; margin-left: 4px; background: none; border: 0; padding: 2px 0 0; font: inherit; color: inherit; }
.drop { width: 12px; height: 9px; }

.tabs { display: flex; align-items: flex-end; height: 42px; }
.tab { display: flex; align-items: center; height: 35px; color: #c8c8c8; }
.tab .ico { margin-right: 8px; }
.tab.current { position: relative; height: 40px; width: 120px; margin-left: 8px; padding: 2px 0 0 15px; border-radius: 8px 8px 0 0; background: #4a6078; color: #f0f0f0; }
.tab.current button { position: absolute; top: 7px; right: 8px; }
.tab.docs { width: 158px; padding-left: 12px; border: 0 solid; border-width: 0 1px 0 0; border-image: linear-gradient(#282828 8px, #444 8px 27px, #282828 27px) 1; }
.tab.user { width: 123px; padding-left: 14px; }
.plus { height: 32px; }
.crumbs { display: flex; align-items: center; height: 37px; padding-left: 9px; background: #4a6078; color: #f0f0f0; }
.crumbs b { font-size: 18px; }
.crumbs button { width: 16px; margin-right: 17px; }
.crumbs path { fill: none; stroke: #f0f0f0; stroke-width: 1.7; }
.crumbs .dim path { stroke: #8b9bac; }
.crumbs .burger { width: 21px; margin-right: 15px; }
.crumbs .burger path { stroke-width: 3; }
.crumbs .sep { width: 12px; height: 16px; margin: 0 15px 0 14px; }

.body { flex: 1; display: flex; }
.tree { width: 422px; margin: 0; padding: 2px 0 0; border-right: 2px solid #232323; border-bottom-left-radius: 10px; background: #1a1a1a; list-style: none; position: relative; }
.tree::before { content: ""; position: absolute; left: 10px; top: 64px; width: 13px; height: 271px; border: solid #58779a; border-width: 0 0 1px 1px; }
.tree li { display: flex; align-items: center; height: 35px; }
.tree li.l1 { padding-left: 23px; }
.twist { display: flex; align-items: center; justify-content: center; width: 23px; height: 23px; color: #999; }
.l0 .twist { width: 20px; margin-right: 6px; }
.l1 .twist { margin-right: 4px; }
.box { border: 1px solid #58779a; }
.closed { width: 12px; height: 16px; }
.opened { width: 14px; height: 10px; }
.name { height: 35px; line-height: 36px; padding: 0 6px 0 3px; margin-left: 3px; border-radius: 4px; }
.tree .current .name { background: #2868b0; }

.right { flex: 1; min-width: 0; display: flex; flex-direction: column; }
.files { flex: 1; background: linear-gradient(#292929, #292929) 39px 0 / 1px 100% no-repeat, linear-gradient(#242424, #242424) 489px 0 / 1px 100% no-repeat, linear-gradient(#242424, #242424) 558px 0 / 1px 100% no-repeat, linear-gradient(#242424, #242424) 674px 0 / 1px 100% no-repeat, linear-gradient(#242424, #242424) 899px 0 / 1px 100% no-repeat, linear-gradient(#242424, #242424) 1105px 0 / 1px 100% no-repeat, linear-gradient(#242424, #242424) 1311px 0 / 1px 100% no-repeat, linear-gradient(90deg, #1f1f1f 39px, #1a1a1a 39px); }
table { width: 100%; table-layout: fixed; border-collapse: separate; border-spacing: 0; color: #b2b2b2; }
.c-n { width: 40px; }
.c-name { width: 450px; }
.c-ext { width: 69px; }
.c-size { width: 116px; }
.c-type { width: 225px; }
.c-date { width: 206px; }
th { height: 39px; padding: 2px 0 0 9px; border: solid #404040; border-width: 0 1px 1px 0; background: #282828; font-weight: 400; text-align: left; }
th:last-child { border-right: 0; }
td { height: 35px; padding: 0 0 0 9px; white-space: nowrap; }
tbody tr:first-child td { height: 38px; padding-top: 3px; }
.num { text-align: right; padding-right: 8px; }
td.idx { padding: 0 4px 0 0; text-align: right; }
.status { display: flex; align-items: center; height: 43px; padding-right: 8px; border-bottom-right-radius: 10px; }
.status > span { display: flex; align-items: center; height: 37px; padding-top: 2px; }
.status .free { width: 313px; padding-left: 4px; }
.status .total { width: 509px; padding-left: 7px; gap: 16px; border: solid #444; border-width: 0 1px; }
.status .msg { flex: 1; gap: 8px; padding-left: 8px; color: #62aef2; }
.status button { width: 22px; height: 17px; background: #1b74d0; }

.taskbar { display: flex; height: 76px; margin: 42px -5px 0 -4px; padding-left: 322px; border: 2px solid #ffffff24; border-radius: 10px; background: linear-gradient(90deg, #251a62, #2c195c 18%, #451a48 34%, #701f1c 52%, #70281a 64%, #6b4c1a 76%, #6c491c 90%, #744824) padding-box; }
.apps { display: flex; flex: 0 0 864px; align-items: center; justify-content: space-between; }
.apps button { position: relative; width: 66px; height: 60px; border-radius: 6px; }
.apps svg { width: 34px; height: 34px; }
.apps .newoutlook svg { width: 40px; height: 40px; margin: -12px 0 0 6px; }
.apps .xy svg { width: 32px; height: 29px; }
.apps .active { background: #ffffff12; border: 1px solid #ffffff14; }
.apps .run::after, .apps .active::after { content: ""; position: absolute; bottom: 2px; left: 29px; width: 8px; height: 5px; border-radius: 3px; background: #b0a0ac; }
.apps .active::after { left: 21px; bottom: 0; width: 22px; background: #6cd0dc; }
.glyph { position: absolute; left: 17px; top: 21px; width: 16px; font: bold 13px/17px "Open Sans", sans-serif; text-align: center; color: #fff; }
.sevenzip .glyph { left: 23px; top: 22px; width: 11px; }
.sevenzip .second { left: 35px; color: #000; }
.tray { flex: 1; display: flex; align-items: center; justify-content: flex-end; padding-right: 14px; color: #fff; }
.t-up { margin-right: 30px; }
.t-usb { margin-right: 22px; }
.t-cloud { margin-right: 23px; }
.t-wifi { margin-right: 11px; }
.t-vol { margin-right: 12px; }
.t-bat { margin-right: 5px; }
.clock { display: flex; flex-direction: column; align-items: flex-end; margin: 0 12px 0 22px; }

.mark { position: absolute; right: 32px; bottom: 35px; display: flex; align-items: flex-start; gap: 9px; opacity: .65; filter: drop-shadow(2px 2px 3px #00000080); }
.mark span { font: bold 53px/34px "DejaVu Sans", sans-serif; color: #e6d0bc; }
.cursor { position: absolute; left: 649px; top: 133px; z-index: 9; }
</style>
